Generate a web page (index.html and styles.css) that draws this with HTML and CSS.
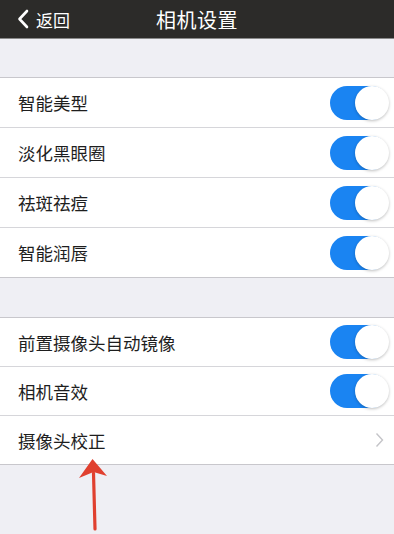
FILE: index.html
```html
<!DOCTYPE html>
<html lang="zh">
<head>
<meta charset="utf-8">
<link rel="stylesheet" href="styles.css">
</head>
<body>
<div class="page">
  <header class="nav">
    <div class="back">
      <svg class="back-icon" width="12" height="20" viewBox="0 0 12 20"><path d="M10 2 L2.5 10 L10 18" fill="none" stroke="#fff" stroke-width="2.6" stroke-linecap="round" stroke-linejoin="round"/></svg>
      <span>返回</span>
    </div>
    <div class="title">相机设置</div>
  </header>
  <div class="gap gap-top"></div>
  <section class="group">
    <div class="row"><span class="label">智能美型</span><span class="toggle"></span></div>
    <div class="row"><span class="label">淡化黑眼圈</span><span class="toggle"></span></div>
    <div class="row"><span class="label">祛斑祛痘</span><span class="toggle"></span></div>
    <div class="row"><span class="label">智能润唇</span><span class="toggle"></span></div>
  </section>
  <div class="gap"></div>
  <section class="group group-b">
    <div class="row"><span class="label">前置摄像头自动镜像</span><span class="toggle"></span></div>
    <div class="row"><span class="label">相机音效</span><span class="toggle"></span></div>
    <div class="row"><span class="label">摄像头校正</span>
      <svg class="chev" width="9" height="16" viewBox="0 0 9 16"><path d="M1.5 1.5 L7.5 8 L1.5 14.5" fill="none" stroke="#c4c4c8" stroke-width="1.4"/></svg>
    </div>
  </section>
  <svg class="arrow" width="40" height="80" viewBox="0 0 40 80">
    <path d="M20.5 16 L22 72" stroke="#e0402f" stroke-width="3.2" stroke-linecap="round" fill="none"/>
    <path d="M19.5 2 L34 19 L20.5 15 L6 21 Z" fill="#e0402f"/>
  </svg>
</div>
</body>
</html>
```
FILE: styles.css
```css
* { box-sizing: border-box; }
html, body { margin: 0; padding: 0; }
body {
  width: 394px;
  height: 534px;
  overflow: hidden;
  background: #efeff4;
  font-family: "Noto Sans CJK SC", "Noto Sans", sans-serif;
}
.page { position: relative; height: 534px; }
.nav {
  height: 39px;
  background: #2c2b29;
  border-bottom: 1px solid #8a8a8a;
  display: flex;
  align-items: center;
  justify-content: center;
  position: relative;
  color: #fff;
}
.back {
  position: absolute;
  left: 17px;
  top: 0;
  height: 38px;
  display: flex;
  align-items: center;
  gap: 7px;
  font-size: 17px;
}
.back-icon { display: block; }
.title { font-size: 20px; letter-spacing: 0.5px; }
.gap { height: 39px; }
.gap-top { height: 38px; }
.group {
  background: #fff;
  border-top: 1px solid #c8c7cc;
  border-bottom: 1px solid #c8c7cc;
}
.row {
  height: 49px;
  display: flex;
  align-items: center;
  justify-content: space-between;
  padding: 0 6px 0 18px;
  position: relative;
}
.row + .row { border-top: 1px solid #d6d6da; height: 50px; }
.group-b .row { height: 48px; }
.group-b .row + .row { height: 49px; }
.label { font-size: 17.5px; color: #1e1e1e; }
.toggle {
  width: 58px;
  height: 34px;
  border-radius: 17px;
  background: #1a84f2;
  position: relative;
}
.toggle::after {
  content: "";
  position: absolute;
  right: -1px;
  top: 0;
  width: 34px;
  height: 34px;
  border-radius: 50%;
  background: #fff;
  box-shadow: 0 1px 3px rgba(0,0,0,0.25);
}
.chev { margin-right: 4px; }
.arrow { position: absolute; left: 73px; top: 457px; }
```
